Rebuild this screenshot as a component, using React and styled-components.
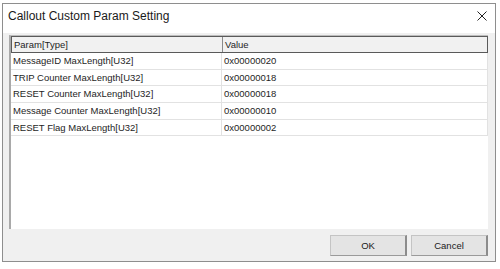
import React from "react";
import styled, {createGlobalStyle} from "styled-components";

const rows = [
	{param: "MessageID MaxLength[U32]", value: "0x00000020"},
	{param: "TRIP Counter MaxLength[U32]", value: "0x00000018"},
	{param: "RESET Counter MaxLength[U32]", value: "0x00000018"},
	{param: "Message Counter MaxLength[U32]", value: "0x00000010"},
	{param: "RESET Flag MaxLength[U32]", value: "0x00000002"},
];

const App = () => {
	return (
		<>
			<GlobalStyle/>
			<Window>
				<TitleBar>
					<Title>Callout Custom Param Setting</Title>
					<CloseButton aria-label="Close">
						<svg width="10" height="10" viewBox="0 0 10 10">
							<path d="M0.5 0.5 L9.5 9.5 M9.5 0.5 L0.5 9.5" stroke="#222" strokeWidth="1" fill="none"/>
						</svg>
					</CloseButton>
				</TitleBar>
				<Body>
					<ListView>
						<HeaderRow>
							<HeaderCell first>Param[Type]</HeaderCell>
							<HeaderCell>Value</HeaderCell>
						</HeaderRow>
						{rows.map((r) => (
							<Row key={r.param}>
								<Cell first>{r.param}</Cell>
								<Cell>{r.value}</Cell>
							</Row>
						))}
					</ListView>
					<Footer>
						<Button>OK</Button>
						<Button>Cancel</Button>
					</Footer>
				</Body>
			</Window>
		</>
	);
};

const GlobalStyle = createGlobalStyle`
  html, body {
    margin: 0;
    padding: 0;
    background: #ffffff;
  }
  body {
    font-family: "Liberation Sans", Arial, sans-serif;
    color: #1b1b1b;
  }
`;

const Window = styled.div`
  margin: 3px 0 0 2px;
  width: 494px;
  height: 259px;
  box-sizing: border-box;
  border: 1px solid #8e8e8e;
  display: flex;
  flex-direction: column;
  background: #f0f0f0;
`;

const TitleBar = styled.div`
  height: 29px;
  flex: none;
  display: flex;
  align-items: center;
  justify-content: space-between;
  background: #ffffff;
  padding: 0 6px 0 5px;
`;

const Title = styled.span`
  font-size: 12px;
  color: #1a1a1a;
  margin-top: -6px;
`;

const CloseButton = styled.div`
  width: 14px;
  height: 14px;
  display: flex;
  align-items: center;
  justify-content: center;
  margin-top: -5px;
`;

const Body = styled.div`
  flex: 1;
  display: flex;
  flex-direction: column;
  padding: 2px 0 0 6px;
`;

const ListView = styled.div`
  width: 479px;
  height: 194px;
  box-sizing: border-box;
  background: #ffffff;
  border-left: 2px solid #a9a9a9;
  border-top: 1px solid #bdbdbd;
  display: flex;
  flex-direction: column;
`;

const HeaderRow = styled.div`
  display: flex;
  height: 17px;
  box-sizing: border-box;
  border: 1px solid #5a5a5a;
  background: #f1f1f1;
`;

const HeaderCell = styled.div`
  width: ${(p) => (p.first ? "211px" : "auto")};
  flex: ${(p) => (p.first ? "none" : "1")};
  box-sizing: border-box;
  border-right: ${(p) => (p.first ? "1px solid #8a8a8a" : "none")};
  font-size: 9.5px;
  line-height: 15px;
  padding-left: 2px;
  color: #1e1e1e;
`;

const Row = styled.div`
  display: flex;
  height: 16.7px;
  box-sizing: border-box;
  border-bottom: 1px solid #e2e2e2;
  border-right: 1px solid #e2e2e2;
`;

const Cell = styled.div`
  width: ${(p) => (p.first ? "211px" : "auto")};
  flex: ${(p) => (p.first ? "none" : "1")};
  box-sizing: border-box;
  border-right: ${(p) => (p.first ? "1px solid #e2e2e2" : "none")};
  font-size: 9.5px;
  line-height: 15.7px;
  padding-left: 2px;
  white-space: nowrap;
  color: #1e1e1e;
`;

const Footer = styled.div`
  display: flex;
  justify-content: flex-end;
  gap: 4px;
  padding: 6px 7px 0 0;
`;

const Button = styled.button`
  width: 77px;
  height: 21px;
  box-sizing: border-box;
  background: #e4e4e4;
  border: 1px solid #c4c4c4;
  border-right: 2px solid #8c8c8c;
  border-bottom: 1px solid #9a9a9a;
  font-family: "Liberation Sans", Arial, sans-serif;
  font-size: 9.5px;
  color: #1a1a1a;
  padding: 0;
  cursor: pointer;
`;

export default App;
